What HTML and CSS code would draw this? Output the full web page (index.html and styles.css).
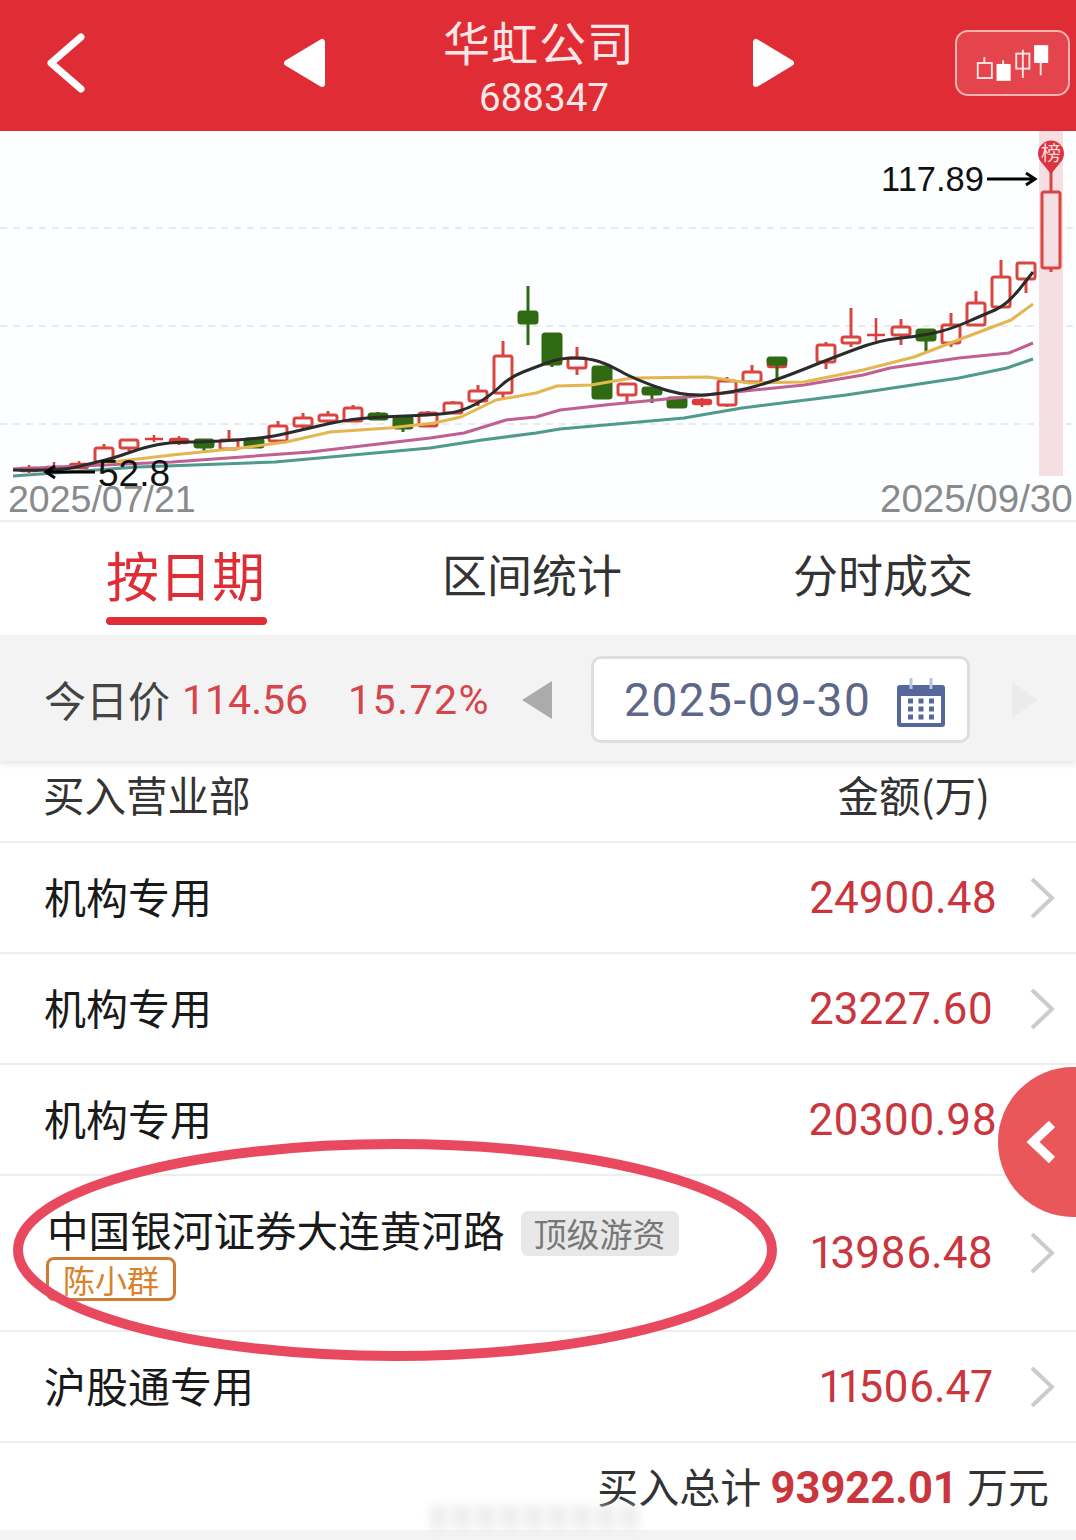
FILE: index.html
```html
<!DOCTYPE html>
<html lang="zh-CN">
<head>
  <meta charset="UTF-8" />
  <meta name="viewport" content="width=device-width, initial-scale=1" />
  <title>华虹公司 688347</title>
  <link rel="stylesheet" href="styles.css">
</head>
<body>
  <div class="page">

    <header class="top-bar">
      <svg class="back-icon" viewBox="0 0 42 60"><polyline points="36,4 6,30 36,56"/></svg>
      <svg class="nav-tri" viewBox="0 0 44 50"><path d="M39 4 L39 46 L4 25 Z"/></svg>
      <div class="stock-title">
        <div class="stock-name">华虹公司</div>
        <div class="stock-code">688347</div>
      </div>
      <svg class="nav-tri" viewBox="0 0 44 50"><path d="M5 4 L5 46 L40 25 Z"/></svg>
      <div class="kline-btn">
        <svg viewBox="955 30 114 66">
          <path class="kline-wick" d="M982 57V63M1002 60V64M1023 49V79M1042 63V76"/>
          <rect class="kline-hollow" x="975" y="63" width="15" height="16"/>
          <rect class="kline-solid" x="995" y="64" width="15" height="18"/>
          <rect class="kline-hollow" x="1016" y="53" width="14" height="16"/>
          <rect class="kline-solid" x="1035" y="44" width="15" height="19"/>
        </svg>
      </div>
    </header>

    <section class="chart">
      <svg viewBox="0 131 1076 389" width="1076" height="389">
        <rect class="today-band" x="1039" y="131" width="24" height="345"/>
        <path class="grid-line" d="M0 228H1076M0 326H1076M0 424H1076"/>

        <g class="up">
          <path d="M104 444V448M129 448V451M229 430V440M278 421V426M303 413V418M303 426V429M328 411V415M328 421V424M353 405V408M428 411V413M453 401V403M478 385V391M478 401V406M503 341V356M503 393V398M577 347V358M577 368V375M627 395V404M727 377V381M727 405V407M752 365V372M826 342V345M826 362V369M851 308V337M851 343V347M901 319V327M901 335V345M951 313V325M951 343V347M976 291V303M1001 260V277M1026 279V293M1051 171V192M1051 268V272"/>
          <rect x="95" y="448" width="18" height="14"/>
          <rect x="120" y="440" width="18" height="8"/>
          <rect x="220" y="440" width="18" height="9"/>
          <rect x="269" y="426" width="18" height="15"/>
          <rect x="294" y="418" width="18" height="8"/>
          <rect x="319" y="415" width="18" height="6"/>
          <rect x="344" y="408" width="18" height="13"/>
          <rect x="419" y="413" width="18" height="13"/>
          <rect x="444" y="403" width="18" height="10"/>
          <rect x="469" y="391" width="18" height="10"/>
          <rect x="494" y="356" width="18" height="37"/>
          <rect x="568" y="358" width="18" height="10"/>
          <rect x="618" y="384" width="18" height="11"/>
          <rect x="718" y="381" width="18" height="24"/>
          <rect x="743" y="372" width="18" height="10"/>
          <rect x="817" y="345" width="18" height="17"/>
          <rect x="842" y="337" width="18" height="6"/>
          <rect x="892" y="327" width="18" height="8"/>
          <rect x="942" y="325" width="18" height="18"/>
          <rect x="967" y="303" width="18" height="22"/>
          <rect x="992" y="277" width="18" height="30"/>
          <rect x="1017" y="263" width="18" height="16"/>
          <rect x="1042" y="192" width="18" height="76"/>
        </g>

        <g class="up-solid">
          <path d="M29 465V473M54 462V472M79 461V468M154 435V442M145 439H163M179 436V445M702 398V407M777 360V370M876 318V341M867 335H885"/>
          <rect x="20" y="468" width="18" height="3"/>
          <rect x="45" y="467" width="18" height="3"/>
          <rect x="70" y="464" width="18" height="4"/>
          <rect x="170" y="439" width="18" height="4"/>
          <rect x="693" y="400" width="18" height="4"/>
          <rect x="768" y="362" width="18" height="5"/>
        </g>

        <g class="down">
          <path d="M204 447V451M378 412V419M403 428V432M528 286V345M552 364V367M652 394V403M777 364V382M926 340V352"/>
          <rect x="195" y="440" width="18" height="7"/>
          <rect x="245" y="439" width="18" height="8"/>
          <rect x="369" y="414" width="18" height="5"/>
          <rect x="394" y="417" width="18" height="11"/>
          <rect x="519" y="312" width="18" height="11"/>
          <rect x="543" y="334" width="18" height="30"/>
          <rect x="593" y="367" width="18" height="31"/>
          <rect x="643" y="388" width="18" height="6"/>
          <rect x="668" y="398" width="18" height="9"/>
          <rect x="768" y="358" width="18" height="6"/>
          <rect x="917" y="330" width="18" height="10"/>
        </g>

        <polyline class="ma ma-teal" points="13,476 138,467 275,462 430,448 482,440 536,433 560,429 684,418 742,408 846,395 959,378 1007,368 1033,359"/>
        <polyline class="ma ma-pink" points="13,469 103,465 172,462 310,452 430,438 464,433 506,420 536,417 560,410 605,405 687,397 804,385 863,375 890,368 959,358 1009,353 1033,343"/>
        <polyline class="ma ma-yellow" points="103,463 172,455 241,448 286,442 330,432 389,428 434,423 461,417 496,400 536,393 557,386 591,385 632,378 708,377 749,383 804,382 863,370 914,357 966,337 1011,320 1033,304"/>
        <path class="ma ma-black" d="M13 470 Q60 471 76.500 467 Q93 463 103.500 460.500 Q114 458 129.500 452.500 Q145 447 158.500 444.500 Q172 442 189 442 Q206 442 235.500 440 Q265 438 279 435 Q293 432 318.500 426 Q344 420 361.500 418.500 Q379 417 404.500 416 Q430 415 445.500 413.500 Q461 412 475 404.500 Q489 397 499.500 387 Q510 377 523 372 Q536 367 548 362.500 Q560 358 574 358 Q588 358 599 361.500 Q610 365 621 371.500 Q632 378 658 387.500 Q684 397 710 394.500 Q736 392 756.500 386 Q777 380 804.500 369 Q832 358 856 349 Q880 340 897 338.500 Q914 337 931.500 333.500 Q949 330 966 322.500 Q983 315 995 310 Q1007 305 1020 288.500 L1033 272"/>

        <path class="pin" d="M1051 174 L1042 163 A13 13 0 1 1 1060 163 Z"/>
        <text class="pin-text" x="1051" y="161">榜</text>

        <path class="arrow" d="M987 179H1034M1026 173L1035 179L1026 185"/>
        <text class="price-label" x="881" y="191">117.89</text>
        <path class="arrow" d="M95 472H47M55 466L46 472L55 478"/>
        <text class="price-label low-label" x="98" y="486">52.8</text>
        <text class="date-label" x="8" y="512">2025/07/21</text>
        <text class="date-label date-right" x="880" y="512">2025/09/30</text>
      </svg>
    </section>

    <nav class="tabs">
      <div class="tab tab-active">按日期</div>
      <div class="tab">区间统计</div>
      <div class="tab tab-last">分时成交</div>
    </nav>

    <div class="date-bar">
      <span class="price-title">今日价</span>
      <span class="price-now">114.56</span>
      <span class="price-pct">15.72%</span>
      <svg class="date-prev" viewBox="0 0 34 42"><path d="M32 2V40L2 21Z"/></svg>
      <div class="date-box">
        <span class="date-text">2025-09-30</span>
        <svg class="calendar" viewBox="0 0 48 50">
          <path class="cal-body" d="M3 8H45A3 3 0 0 1 48 11V47A3 3 0 0 1 45 50H3A3 3 0 0 1 0 47V11A3 3 0 0 1 3 8Z"/>
          <rect class="cal-page" x="4" y="19" width="40" height="27"/>
          <path class="cal-ring" d="M14 1V12M34 1V12"/>
          <path class="cal-dots" d="M11 24H16M21.500 24H26.500M32 24H37M11 32H16M21.500 32H26.500M32 32H37M11 40H16M21.500 40H26.500M32 40H37"/>
        </svg>
      </div>
      <svg class="date-next" viewBox="0 0 30 38"><path d="M2 1V37L28 19Z"/></svg>
    </div>

    <section class="list">
      <div class="list-head">
        <span>买入营业部</span>
        <span>金额(万)</span>
      </div>

      <div class="row">
        <div class="row-name">机构专用</div>
        <div class="row-value row-value-wide">24900.48</div>
        <svg class="row-arrow" viewBox="0 0 26 42"><polyline points="3,2 23,21 3,40"/></svg>
      </div>
      <div class="row">
        <div class="row-name">机构专用</div>
        <div class="row-value">23227.60</div>
        <svg class="row-arrow" viewBox="0 0 26 42"><polyline points="3,2 23,21 3,40"/></svg>
      </div>
      <div class="row">
        <div class="row-name">机构专用</div>
        <div class="row-value row-value-wide">20300.98</div>
        <svg class="row-arrow" viewBox="0 0 26 42"><polyline points="3,2 23,21 3,40"/></svg>
      </div>
      <div class="row row-tall">
        <div class="row-name">
          <div class="name-line">中国银河证券大连黄河路<span class="tag-grey">顶级游资</span></div>
          <div class="tag-orange">陈小群</div>
        </div>
        <div class="row-value">13986.48</div>
        <svg class="row-arrow" viewBox="0 0 26 42"><polyline points="3,2 23,21 3,40"/></svg>
        <svg class="circle-mark" viewBox="0 0 780 232"><ellipse cx="387" cy="116" rx="377" ry="106"/></svg>
      </div>
      <div class="row">
        <div class="row-name">沪股通专用</div>
        <div class="row-value">11506.47</div>
        <svg class="row-arrow" viewBox="0 0 26 42"><polyline points="3,2 23,21 3,40"/></svg>
      </div>

      <div class="float-btn">
        <svg viewBox="0 0 32 44"><polyline points="26,4 7,22 26,40"/></svg>
      </div>
    </section>

    <footer class="total">
      买入总计 <b>93922.01</b> 万元
    </footer>
    <div class="watermark"></div>
    <div class="bottom-strip"></div>

  </div>
</body>
</html>
```

FILE: styles.css
```css
body {
  margin: 0;
  background: #fff;
  font-family: "Noto Sans CJK SC", "Noto Sans", sans-serif;
  color: #222;
}
.page {
  position: relative;
  width: 1076px;
  height: 1540px;
  overflow: hidden;
}

/* header */
.top-bar {
  height: 131px;
  background: #e02c34;
  display: flex;
  align-items: center;
  color: #fff;
  box-sizing: border-box;
  padding: 0 6px 5px 45px;
}
.back-icon {
  width: 42px;
  height: 60px;
  margin-right: 196px;
  fill: none;
  stroke: #fff;
  stroke-width: 7;
  stroke-linecap: round;
  stroke-linejoin: round;
}
.nav-tri {
  width: 44px;
  height: 50px;
  fill: #fff;
  stroke: #fff;
  stroke-width: 6;
  stroke-linejoin: round;
}
.stock-title {
  width: 424px;
  margin-top: 8px;
  text-align: center;
  color: #fbe6e6;
}
.stock-name {
  font-size: 47px;
  line-height: 50px;
  letter-spacing: 1px;
}
.stock-code {
  margin-top: 12px;
  padding-left: 10px;
  font-family: Roboto, sans-serif;
  font-size: 38.5px;
  line-height: 40px;
}
.kline-btn {
  width: 115px;
  height: 66px;
  margin: 0 0 0 auto;
  box-sizing: border-box;
  border: 2px solid #f4b4b4;
  border-radius: 13px;
  background: #e4444c;
}
.kline-btn svg {
  display: block;
  width: 111px;
  height: 62px;
}
.kline-wick {
  stroke: #fbe6e6;
  stroke-width: 2;
  fill: none;
}
.kline-hollow {
  fill: none;
  stroke: #fbe6e6;
  stroke-width: 2;
}
.kline-solid {
  fill: #fff;
}

/* chart */
.chart {
  height: 389px;
  background: #fdfeff;
}
.chart svg {
  display: block;
}
.chart rect {
  rx: 2px;
}
.chart .today-band {
  fill: #f6dfe2;
  rx: 0;
}
.grid-line {
  stroke: #e4e4e4;
  stroke-width: 1.5;
  stroke-dasharray: 7 6;
  fill: none;
}
.up {
  fill: none;
  stroke: #d9453f;
  stroke-width: 3;
}
.up-solid {
  fill: #dd3c38;
  stroke: #dd3c38;
  stroke-width: 2.5;
}
.down {
  fill: #2f6a13;
  stroke: #2f6a13;
  stroke-width: 3;
}
.ma {
  fill: none;
  stroke-width: 3;
  stroke-linejoin: round;
}
.ma-black {
  stroke: #2b2b2b;
}
.ma-yellow {
  stroke: #e3b64f;
}
.ma-pink {
  stroke: #bf5f92;
}
.ma-teal {
  stroke: #4f9a8c;
}
.pin {
  fill: #dd3540;
}
.pin-text {
  fill: #fbdcdc;
  font-size: 20px;
  text-anchor: middle;
}
.arrow {
  fill: none;
  stroke: #000;
  stroke-width: 3;
}
.price-label {
  font-family: "Liberation Sans", sans-serif;
  font-size: 34.5px;
  fill: #111;
}
.low-label {
  font-size: 37px;
}
.date-label {
  font-family: "Liberation Sans", sans-serif;
  font-size: 37.5px;
  fill: #8a8a8a;
}
.date-right {
  font-size: 38.5px;
}

/* tabs */
.tabs {
  height: 115px;
  box-sizing: border-box;
  border-top: 2px solid #efefef;
  display: flex;
  align-items: center;
  gap: 177px;
  padding: 0 0 0 106px;
}
.tab {
  position: relative;
  font-size: 45px;
  line-height: 104px;
  margin-bottom: 9px;
  color: #333;
}
.tab-active {
  font-size: 53px;
  color: #e02c34;
}
.tab-last {
  margin-left: -6px;
}
.tab-active::after {
  content: "";
  position: absolute;
  left: 0;
  right: -2px;
  bottom: 1px;
  height: 8px;
  border-radius: 4px;
  background: #e02c34;
}

/* date row */
.date-bar {
  position: relative;
  height: 126px;
  box-sizing: border-box;
  background: #f3f3f3;
  box-shadow: 0 3px 6px rgba(0, 0, 0, 0.1);
  display: flex;
  align-items: center;
  padding: 4px 0 0 44px;
}
.price-title {
  margin-top: -4px;
  font-size: 42px;
  color: #444;
}
.price-now,
.price-pct {
  font-family: Roboto, sans-serif;
  font-size: 41px;
  color: #d5454b;
}
.price-now {
  margin-left: 12px;
}
.price-pct {
  margin-left: 40px;
  letter-spacing: 1.5px;
}
.date-prev {
  width: 34px;
  height: 42px;
  margin-left: 30px;
  fill: #ababab;
}
.date-box {
  width: 379px;
  height: 87px;
  margin: -1px 0 0 37px;
  box-sizing: border-box;
  background: #fff;
  border: 3px solid #dedede;
  border-radius: 10px;
  display: flex;
  align-items: center;
  padding-left: 30px;
}
.date-text {
  font-family: Roboto, sans-serif;
  font-size: 46px;
  letter-spacing: 1.5px;
  color: #5d6889;
}
.calendar {
  width: 48px;
  height: 50px;
  margin: 4px 0 0 26px;
}
.cal-body {
  fill: #56679d;
}
.cal-page {
  fill: #fff;
}
.cal-ring {
  stroke: #b9c4e2;
  stroke-width: 3;
  fill: none;
}
.cal-dots {
  stroke: #56679d;
  stroke-width: 5;
  fill: none;
}
.date-next {
  width: 30px;
  height: 38px;
  margin-left: 40px;
  fill: #ebebeb;
}

/* list */
.list {
  position: relative;
}
.list-head {
  height: 82px;
  box-sizing: border-box;
  border-bottom: 2px solid #eeeeee;
  display: flex;
  align-items: center;
  justify-content: space-between;
  padding: 0 86px 14px 43px;
  font-size: 41.5px;
  color: #333;
}
.row {
  position: relative;
  height: 111px;
  box-sizing: border-box;
  border-bottom: 2px solid #eeeeee;
  display: flex;
  align-items: center;
  padding: 0 21px 0 44px;
}
.row-tall {
  height: 156px;
}
.row-name {
  padding-bottom: 4px;
  font-size: 42px;
  color: #1a1a1a;
}
.row-value {
  margin-left: auto;
  font-family: Roboto, sans-serif;
  font-size: 44px;
  font-variant-numeric: proportional-nums;
  color: #c9363d;
}
.row-value-wide {
  margin-right: -4px;
}
.row-arrow {
  width: 26px;
  height: 42px;
  margin-left: 36px;
  fill: none;
  stroke: #cccccc;
  stroke-width: 4;
}
.name-line {
  display: flex;
  align-items: center;
  margin: 5px 0 0 3px;
  font-size: 41.6px;
  line-height: 46px;
}
.tag-grey {
  margin: 4px 0 -4px 16px;
  padding: 0 13px;
  border-radius: 7px;
  background: #e8e8e8;
  color: #777;
  font-size: 33px;
  line-height: 45px;
}
.tag-orange {
  width: fit-content;
  margin: 5px 0 0 2px;
  padding: 0 14px;
  box-sizing: border-box;
  height: 44px;
  border: 3px solid #d07b33;
  border-radius: 8px;
  color: #d9822b;
  font-size: 32px;
  line-height: 38px;
}
.circle-mark {
  position: absolute;
  left: 8px;
  top: -42px;
  width: 780px;
  height: 232px;
  fill: none;
  stroke: #e9495f;
  stroke-width: 10;
}
.float-btn {
  position: absolute;
  right: 0;
  top: 306px;
  width: 78px;
  height: 150px;
  border-radius: 75px 0 0 75px;
  background: #e9575b;
  display: flex;
  align-items: center;
}
.float-btn svg {
  width: 32px;
  height: 44px;
  margin-left: 28px;
  fill: none;
  stroke: #fff;
  stroke-width: 9;
}

/* footer */
.total {
  height: 87px;
  box-sizing: border-box;
  padding: 0 27px 0 0;
  text-align: right;
  font-size: 41px;
  line-height: 84px;
  color: #333;
}
.total b {
  font-family: Roboto, sans-serif;
  font-size: 43.5px;
  color: #c9363d;
}
.watermark {
  position: absolute;
  left: 430px;
  top: 1505px;
  width: 210px;
  height: 25px;
  background: repeating-linear-gradient(90deg, #e4e4e4 0 16px, #f4f4f4 16px 24px);
  filter: blur(4px);
  opacity: 0.6;
}
.bottom-strip {
  height: 10px;
  background: #f3f3f3;
}
```
